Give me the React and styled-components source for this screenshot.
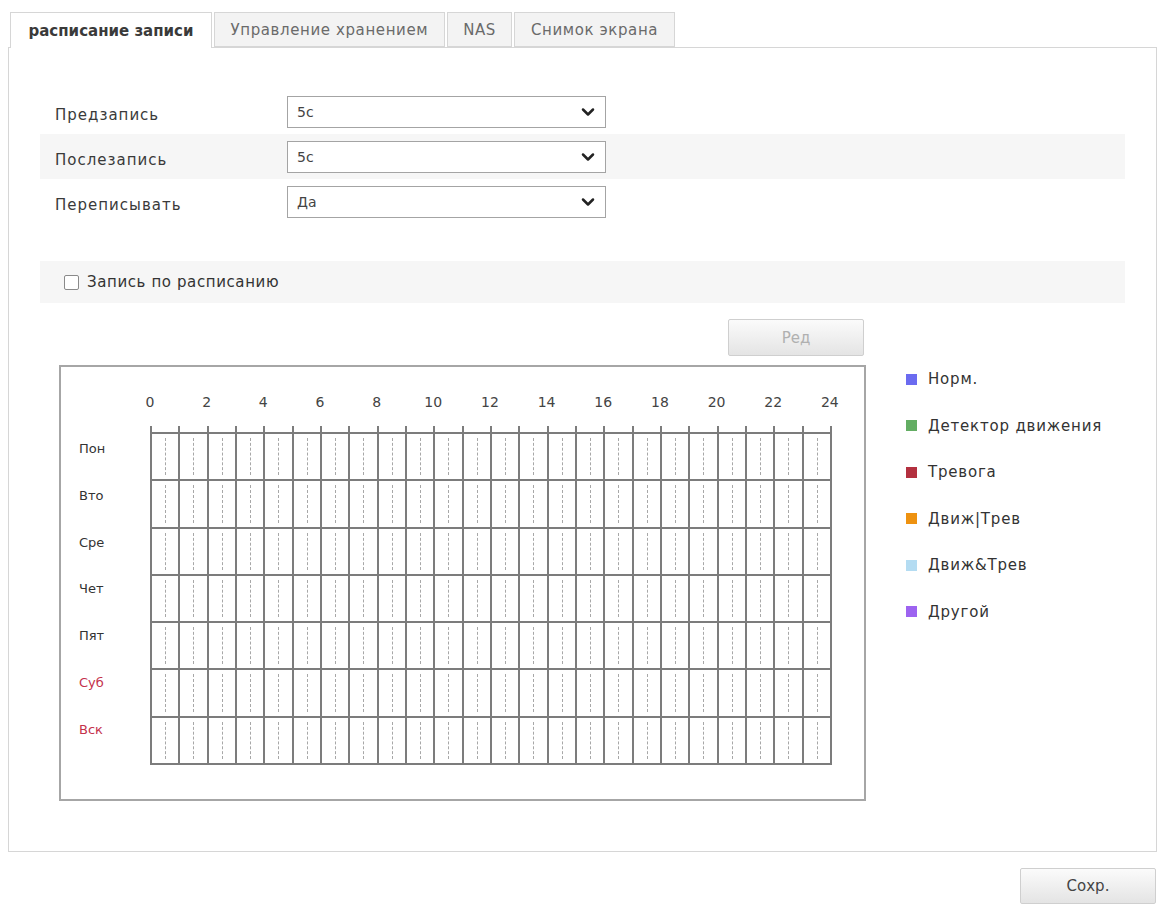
import React from "react";
import styled, { createGlobalStyle } from "styled-components";
import { ChevronDown } from "lucide-react";

const GlobalStyle = createGlobalStyle`
  body {
    margin: 0;
    background: #fff;
    font-family: "DejaVu Sans", Verdana, sans-serif;
    color: #333;
  }
`;

const tabs = [
  { title: "расписание записи", active: true },
  { title: "Управление хранением" },
  { title: "NAS" },
  { title: "Снимок экрана" },
];

const fields = [
  { label: "Предзапись", value: "5c" },
  { label: "Послезапись", value: "5c", shaded: true },
  { label: "Переписывать", value: "Да" },
];

const days = [
  { name: "Пон" },
  { name: "Вто" },
  { name: "Сре" },
  { name: "Чет" },
  { name: "Пят" },
  { name: "Суб", weekend: true },
  { name: "Вск", weekend: true },
];

const legend = [
  { name: "Норм.", color: "#6b6bf0" },
  { name: "Детектор движения", color: "#63ad63" },
  { name: "Тревога", color: "#b3303f" },
  { name: "Движ|Трев", color: "#ee9210" },
  { name: "Движ&Трев", color: "#b4dcf2" },
  { name: "Другой", color: "#9d63f0" },
];

const hours = [0, 2, 4, 6, 8, 10, 12, 14, 16, 18, 20, 22, 24];
const slots = Array.from({ length: 24 }, (_, i) => i);

const App = () => {
  return (
    <Page>
      <GlobalStyle />
      <TabBar>
        {tabs.map((tab) => (
          <Tab key={tab.title} active={tab.active}>
            {tab.title}
          </Tab>
        ))}
      </TabBar>
      <Panel>
        {fields.map((field) => (
          <FieldRow key={field.label} shaded={field.shaded}>
            <FieldLabel>{field.label}</FieldLabel>
            <Select>
              <span>{field.value}</span>
              <ChevronDown size={20} strokeWidth={3} color="#222" />
            </Select>
          </FieldRow>
        ))}

        <ToggleRow>
          <Checkbox />
          <span>Запись по расписанию</span>
        </ToggleRow>

        <ScheduleArea>
          <ScheduleColumn>
            <GreyButton disabled>Ред</GreyButton>
            <ScheduleBox>
              <HourRow>
                {hours.map((h) => (
                  <HourLabel key={h}>{h}</HourLabel>
                ))}
              </HourRow>
              <TickRow>
                {slots.map((s) => (
                  <Tick key={s} />
                ))}
              </TickRow>
              <GridWrap>
                <DayColumn>
                  {days.map((d) => (
                    <DayLabel key={d.name} weekend={d.weekend}>
                      {d.name}
                    </DayLabel>
                  ))}
                </DayColumn>
                <Grid>
                  {days.map((d) => (
                    <DayRow key={d.name}>
                      {slots.map((s) => (
                        <HourCell key={s} />
                      ))}
                    </DayRow>
                  ))}
                </Grid>
              </GridWrap>
            </ScheduleBox>
          </ScheduleColumn>

          <Legend>
            {legend.map((item) => (
              <LegendItem key={item.name}>
                <Swatch color={item.color} />
                {item.name}
              </LegendItem>
            ))}
          </Legend>
        </ScheduleArea>
      </Panel>
      <Footer>
        <GreyButton>Сохр.</GreyButton>
      </Footer>
    </Page>
  );
};

const Page = styled.div`
  width: 1162px;
  box-sizing: border-box;
  padding: 12px 5px 0 8px;
`;

const TabBar = styled.div`
  display: flex;
  gap: 2px;
  padding-left: 2px;
  height: 35px;
  position: relative;
  z-index: 1;
`;

const Tab = styled.div`
  box-sizing: border-box;
  height: ${(p) => (p.active ? "36px" : "35px")};
  padding: 0 ${(p) => (p.active ? "17.5px" : "15.5px")};
  display: flex;
  align-items: center;
  font-size: 15px;
  letter-spacing: ${(p) => (p.active ? "0" : "0.6px")};
  font-weight: ${(p) => (p.active ? "bold" : "normal")};
  color: ${(p) => (p.active ? "#3a3a3a" : "#6a6a6a")};
  background: ${(p) => (p.active ? "#fff" : "#f3f3f3")};
  border: 1px solid #d6d6d6;
  border-bottom: ${(p) => (p.active ? "none" : "1px solid #d6d6d6")};
`;

const Panel = styled.div`
  height: 805px;
  box-sizing: border-box;
  border: 1px solid #d6d6d6;
  padding: 41px 31px 0 31px;
`;

const FieldRow = styled.div`
  height: 45px;
  display: flex;
  align-items: center;
  padding-left: 15px;
  background: ${(p) => (p.shaded ? "#f6f6f6" : "transparent")};
`;

const FieldLabel = styled.div`
  width: 232px;
  font-size: 15px;
  letter-spacing: 1px;
  color: #3a3a3a;
  padding-top: 6px;
`;

const Select = styled.div`
  width: 319px;
  height: 32px;
  box-sizing: border-box;
  border: 1px solid #a4a4a4;
  background: #fff;
  display: flex;
  align-items: center;
  justify-content: space-between;
  padding: 0 7px 0 9px;
  font-size: 14px;
  color: #444;
`;

const ToggleRow = styled.div`
  margin-top: 37px;
  height: 42px;
  background: #f6f6f6;
  display: flex;
  align-items: center;
  gap: 8px;
  padding-left: 24px;
  font-size: 15px;
  letter-spacing: 0.6px;
  color: #333;
`;

const Checkbox = styled.span`
  width: 15px;
  height: 15px;
  box-sizing: border-box;
  border: 1px solid #8a8a8a;
  border-radius: 2px;
  background: #fff;
`;

const ScheduleArea = styled.div`
  display: flex;
  gap: 40px;
  margin: 16px 0 0 19px;
`;

const ScheduleColumn = styled.div`
  width: 807px;
  display: flex;
  flex-direction: column;
  align-items: flex-end;
`;

const GreyButton = styled.button`
  width: 136px;
  height: ${(p) => (p.disabled ? "37px" : "36px")};
  margin-right: ${(p) => (p.disabled ? "2px" : "0")};
  border: 1px solid #cfcfcf;
  border-radius: 2px;
  background: linear-gradient(#fbfbfb, #e4e4e4);
  font-family: "DejaVu Sans", Verdana, sans-serif;
  font-size: 15px;
  color: ${(p) => (p.disabled ? "#b0b0b0" : "#444")};
`;

const ScheduleBox = styled.div`
  align-self: stretch;
  margin-top: 9px;
  height: 436px;
  box-sizing: border-box;
  border: 2px solid #a6a6a6;
  padding-top: 27px;
`;

const HourRow = styled.div`
  display: flex;
  padding-left: 60.67px;
  height: 17px;
`;

const HourLabel = styled.div`
  width: 56.67px;
  text-align: center;
  font-size: 14px;
  line-height: 17px;
  color: #444;
`;

const TickRow = styled.div`
  display: flex;
  margin: 15px 0 0 89px;
  width: 682px;
  height: 6px;
  box-sizing: border-box;
  border-right: 2px solid #7c7c7c;
`;

const Tick = styled.div`
  flex: 1;
  border-left: 2px solid #7c7c7c;
`;

const GridWrap = styled.div`
  display: flex;
  align-items: flex-start;
`;

const DayColumn = styled.div`
  width: 89px;
  padding-left: 18px;
  box-sizing: border-box;
`;

const DayLabel = styled.div`
  height: 46.8px;
  box-sizing: border-box;
  padding-top: 8px;
  line-height: 18px;
  font-size: 13px;
  color: ${(p) => (p.weekend ? "#c4314b" : "#333")};
`;

const Grid = styled.div`
  width: 682px;
  box-sizing: border-box;
  border-top: 2px solid #7c7c7c;
  border-right: 2px solid #7c7c7c;
`;

const DayRow = styled.div`
  display: flex;
  height: 47.3px;
  box-sizing: border-box;
  border-bottom: 2px solid #7c7c7c;
`;

const HourCell = styled.div`
  flex: 1;
  position: relative;
  border-left: 2px solid #7c7c7c;

  &::after {
    content: "";
    position: absolute;
    left: 50%;
    top: 4px;
    bottom: 4px;
    border-left: 1px dashed #a8a8a8;
  }
`;

const Legend = styled.div`
  display: flex;
  flex-direction: column;
  margin-top: 37px;
`;

const LegendItem = styled.div`
  height: 46.5px;
  display: flex;
  align-items: center;
  gap: 11px;
  font-size: 15px;
  letter-spacing: 0.8px;
  color: #333;
`;

const Swatch = styled.span`
  width: 11px;
  height: 11px;
  background: ${(p) => p.color};
`;

const Footer = styled.div`
  display: flex;
  justify-content: flex-end;
  margin-top: 16px;
  padding-right: 1px;
`;

export default App;
